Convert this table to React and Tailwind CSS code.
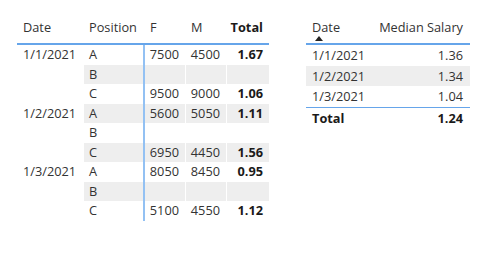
import React from "react";

const rows = [
  { date: "1/1/2021", pos: "A", f: "7500", m: "4500", total: "1.67" },
  { date: "", pos: "B", f: "", m: "", total: "" },
  { date: "", pos: "C", f: "9500", m: "9000", total: "1.06" },
  { date: "1/2/2021", pos: "A", f: "5600", m: "5050", total: "1.11" },
  { date: "", pos: "B", f: "", m: "", total: "" },
  { date: "", pos: "C", f: "6950", m: "4450", total: "1.56" },
  { date: "1/3/2021", pos: "A", f: "8050", m: "8450", total: "0.95" },
  { date: "", pos: "B", f: "", m: "", total: "" },
  { date: "", pos: "C", f: "5100", m: "4550", total: "1.12" },
];

const medians = [
  { date: "1/1/2021", value: "1.36" },
  { date: "1/2/2021", value: "1.34" },
  { date: "1/3/2021", value: "1.04" },
];

const cols = "grid grid-cols-[67px_59px_42px_41px_43px]";

const Matrix = () => (
  <div className="w-[252px]">
    <div className={`${cols} h-[27px] border-b-2 border-[#66a5ea] leading-[18px]`}>
      <div className="pl-[6px]">Date</div>
      <div className="pl-[5px]">Position</div>
      <div className="pl-[7px]">F</div>
      <div className="pl-[6px]">M</div>
      <div className="pr-[6px] text-right font-bold text-[#1b1a19]">Total</div>
    </div>
    {rows.map((row, i) => {
      const bg = i % 2 === 1 ? "bg-[#eeeeee]" : "bg-white";
      return (
        <div key={i} className={`${cols} h-[19.5px] leading-[19.5px]`}>
          <div className="pl-[6px] bg-white">{row.date}</div>
          <div className={`pl-[5px] ${bg}`}>{row.pos}</div>
          <div className={`pr-[6px] text-right border-l-2 border-[#93c1f3] ${bg}`}>{row.f}</div>
          <div className={`pr-[6px] text-right border-l border-white ${bg}`}>{row.m}</div>
          <div className={`pr-[6px] text-right border-l border-white font-bold text-[#1b1a19] ${bg}`}>
            {row.total}
          </div>
        </div>
      );
    })}
  </div>
);

const MedianTable = () => (
  <div className="w-[164px]">
    <div className="grid grid-cols-[1fr_1fr] h-[27px] border-b-2 border-[#66a5ea] leading-[18px]">
      <div className="pl-[6px] relative">
        Date
        {/* sort indicator */}
        <svg className="absolute left-[9px] top-[18px]" width="8" height="5" viewBox="0 0 8 5">
          <polygon points="0,5 4,0 8,5" fill="#252423" />
        </svg>
      </div>
      <div className="pr-[7px] text-right whitespace-nowrap">Median Salary</div>
    </div>
    {medians.map((row, i) => (
      <div
        key={i}
        className={`grid grid-cols-[1fr_1fr] h-[20.5px] leading-[20.5px] ${i % 2 === 1 ? "bg-[#eeeeee]" : "bg-white"}`}
      >
        <div className="pl-[6px]">{row.date}</div>
        <div className="pr-[7px] text-right">{row.value}</div>
      </div>
    ))}
    <div className="grid grid-cols-[1fr_1fr] h-[21px] leading-[20px] border-t border-[#66a5ea] font-bold text-[#1b1a19]">
      <div className="pl-[6px]">Total</div>
      <div className="pr-[7px] text-right">1.24</div>
    </div>
  </div>
);

const App = () => {
  return (
    <div className="w-[497px] h-[256px] bg-white flex items-start pt-[18px] pl-[17px] gap-[37px] text-[12.75px] text-[#333333] font-['Open_Sans','Noto_Sans',sans-serif]">
      <Matrix />
      <MedianTable />
    </div>
  );
};

export default App;
